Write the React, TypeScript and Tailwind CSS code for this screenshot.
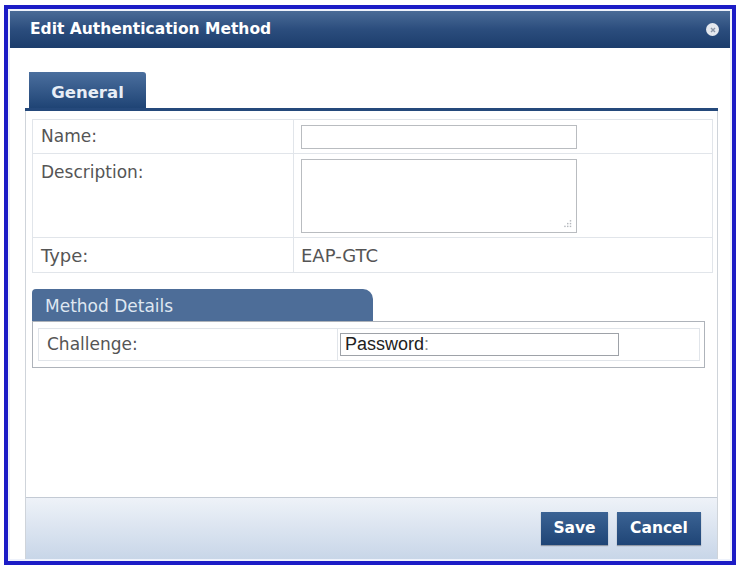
export default function App() {
  const font = "font-['DejaVu_Sans',Verdana,sans-serif]";

  return (
    <div className={`w-[740px] h-[568px] bg-white pt-[5px] pl-[4px] ${font}`}>
      <div className="w-[732px] h-[560px] border-4 border-[#1c1cc6] p-[2px] bg-[#eef2fb] flex flex-col">
        {/* title bar */}
        <div className="h-[37px] shrink-0 flex items-center justify-between pl-[20px] pr-[11px] bg-gradient-to-b from-[#4a6b97] via-[#2b4d7d] to-[#1c3d6c]">
          <span className="text-white font-bold text-[15.5px]">Edit Authentication Method</span>
          <span className="w-[13px] h-[13px] rounded-full bg-[#e4e8ee] flex items-center justify-center">
            <svg width="6" height="6" viewBox="0 0 6 6">
              <path d="M1 1L5 5M5 1L1 5" stroke="#8a95a6" strokeWidth="1.4" />
            </svg>
          </span>
        </div>

        {/* body */}
        <div className="flex-1 flex flex-col bg-white pl-[15px] pr-[12px] pt-[24px]">
          <div className="h-[36px] w-[117px] ml-[4px] flex items-center justify-center bg-gradient-to-b from-[#4b6f9e] to-[#1f4475] rounded-tr-[3px]">
            <span className="text-[#e8eef6] font-bold text-[16.5px] pt-[6px]">General</span>
          </div>
          <div className="h-[3px] bg-[#25497b]" />

          <div className="flex-1 flex flex-col border-x border-[#cfd4da]">
            <div className="flex-1 pt-[8px] pl-[6px] pr-[4px]">
              <div className="border border-[#e1e5ea] text-[#555] text-[17px]">
                <div className="flex h-[34px] border-b border-[#e1e5ea]">
                  <div className="w-[261px] border-r border-[#e1e5ea] pl-[8px] flex items-center">Name:</div>
                  <div className="flex-1 pl-[7px] flex items-center">
                    <div className="w-[276px] h-[24px] border border-[#b9bcc0] bg-white" />
                  </div>
                </div>
                <div className="flex h-[84px] border-b border-[#e1e5ea]">
                  <div className="w-[261px] border-r border-[#e1e5ea] pl-[8px] pt-[6px]">Description:</div>
                  <div className="flex-1 pl-[7px] pt-[5px]">
                    <div className="relative w-[276px] h-[74px] border border-[#b9bcc0] bg-white">
                      <svg className="absolute right-[4px] bottom-[3px]" width="10" height="10" viewBox="0 0 9 9">
                        <g fill="#b4b8bd">
                          <rect x="7" y="1" width="1.3" height="1.3" />
                          <rect x="4.5" y="3.5" width="1.3" height="1.3" />
                          <rect x="7" y="3.5" width="1.3" height="1.3" />
                          <rect x="2" y="6" width="1.3" height="1.3" />
                          <rect x="4.5" y="6" width="1.3" height="1.3" />
                          <rect x="7" y="6" width="1.3" height="1.3" />
                        </g>
                      </svg>
                    </div>
                  </div>
                </div>
                <div className="flex h-[34px] text-[18px]">
                  <div className="w-[261px] border-r border-[#e1e5ea] pl-[8px] flex items-center">Type:</div>
                  <div className="flex-1 pl-[7px] flex items-center">EAP-GTC</div>
                </div>
              </div>

              {/* method details */}
              <div className="mt-[16px] w-[673px]">
                <div className="h-[32px] w-[341px] bg-[#4d6d98] rounded-tl-[4px] rounded-tr-[10px] pl-[13px] flex items-end pb-[2px]">
                  <span className="text-[#dfe7f1] text-[17px]">Method Details</span>
                </div>
                <div className="h-[47px] border border-[#aeb3ba] pt-[6px] pl-[5px] pr-[4px]">
                  <div className="flex h-[33px] border border-[#e1e5ea] text-[17px] text-[#555]">
                    <div className="w-[299px] border-r border-[#e1e5ea] pl-[8px] flex items-center">Challenge:</div>
                    <div className="flex-1 pl-[2px] flex items-center">
                      <div className="w-[279px] h-[23px] border border-[#9ea2a8] bg-white flex items-center pl-[4px] font-['Liberation_Sans',Arial,sans-serif] text-[18px] text-[#222]">
                        Password<span className="text-[#888]">:</span>
                      </div>
                    </div>
                  </div>
                </div>
              </div>
            </div>

            {/* footer */}
            <div className="h-[62px] shrink-0 border-t border-[#c3cad4] bg-gradient-to-b from-[#eef2f8] to-[#c8d6e8] flex items-center justify-end gap-[9px] pr-[16px]">
              <button className="w-[67px] h-[33px] bg-gradient-to-b from-[#3b6394] to-[#1f4576] text-white font-bold text-[15.5px] shadow-[0_1px_1px_rgba(0,0,0,0.3)]">
                Save
              </button>
              <button className="w-[84px] h-[33px] bg-gradient-to-b from-[#3b6394] to-[#1f4576] text-white font-bold text-[15.5px] shadow-[0_1px_1px_rgba(0,0,0,0.3)]">
                Cancel
              </button>
            </div>
          </div>
        </div>
      </div>
    </div>
  );
}
